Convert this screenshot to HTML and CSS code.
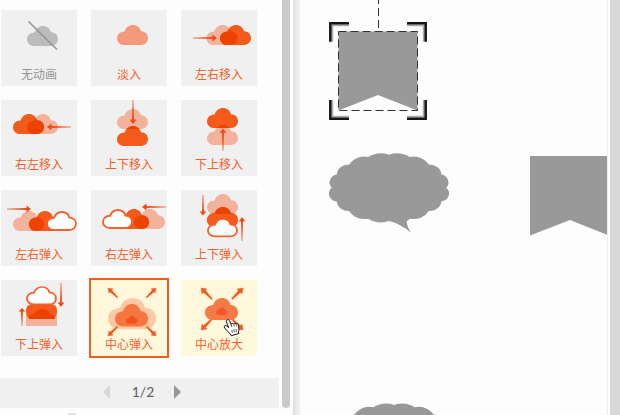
FILE: index.html
```html
<!DOCTYPE html>
<html lang="zh-CN">
<head>
<meta charset="utf-8">
<title>动画</title>
<link rel="stylesheet" href="styles.css">
</head>
<body>
<svg class="defs" width="0" height="0" aria-hidden="true">
  <defs>
    <path id="cloud" d="M7.200 20C3 20 0 17 0 13.200S3 6.600 7.600 6.400C9 2.300 12.200 0 16 0s7 2.400 8 6.300C28.300 6.500 31 9.300 31 13.100S28.200 20 24 20z"/>
    <clipPath id="clip"><use href="#cloud"/></clipPath>
    <linearGradient id="fade" gradientUnits="userSpaceOnUse" x1="0" y1="0" x2="20" y2="0"><stop offset="0" stop-color="#f04a10" stop-opacity=".3"/><stop offset="1" stop-color="#f04a10"/></linearGradient>
    <g id="arrow"><path d="M0-1h20v2H0z" fill="url(#fade)"/><path d="M19.500-3.400L24 0l-4.500 3.400z" fill="#f04a10"/></g>
    <path id="ray" d="M0 0l5.200.9-1.300 1.300L10 9.300 9.300 10 2.200 3.900.9 5.200z" fill="#f25a20" stroke="#f25a20" stroke-width=".4"/>
  </defs>
</svg>
<div class="app">
  <aside class="panel">
    <div class="content">
      <div class="grid">
        <button class="tile off"><svg viewBox="0 0 76 57"><use href="#cloud" x="26" y="16" fill="#bcbcbc"/><path d="M27.500 11.500L56 39.500" stroke="#969696" stroke-width="1.700"/></svg><span>无动画</span></button>
        <button class="tile"><svg viewBox="0 0 76 57"><use href="#cloud" x="26" y="15" fill="#f49a7a"/></svg><span>淡入</span></button>
        <button class="tile"><svg viewBox="0 0 76 57"><use href="#cloud" x="25.500" y="15" class="pale"/><use href="#cloud" x="39" y="15" class="solid"/><g transform="translate(39 15)" clip-path="url(#clip)"><use href="#cloud" x="-13.500" class="deep"/></g><use href="#arrow" transform="translate(12 28)"/></svg><span>左右移入</span></button>
        <button class="tile"><svg viewBox="0 0 76 57"><use href="#cloud" x="26" y="14" class="pale"/><use href="#cloud" x="12" y="14" class="solid"/><g transform="translate(12 14)" clip-path="url(#clip)"><use href="#cloud" x="14" class="deep"/></g><use href="#arrow" transform="translate(70 27) scale(-1 1)"/></svg><span>右左移入</span></button>
        <button class="tile"><svg viewBox="0 0 76 57"><use href="#cloud" x="26" y="9" class="pale"/><use href="#cloud" x="26" y="26" class="solid"/><g transform="translate(26 26)" clip-path="url(#clip)"><use href="#cloud" y="-17" class="deep"/></g><use href="#arrow" transform="translate(42 0) rotate(90)"/></svg><span>上下移入</span></button>
        <button class="tile"><svg viewBox="0 0 76 57"><use href="#cloud" x="26" y="25" class="pale"/><use href="#cloud" x="26" y="8" class="solid"/><g transform="translate(26 8)" clip-path="url(#clip)"><use href="#cloud" y="17" class="deep"/></g><use href="#arrow" transform="translate(42 51) rotate(-90) scale(.94 1)"/></svg><span>下上移入</span></button>
        <button class="tile"><svg viewBox="0 0 76 57"><use href="#cloud" x="12" y="21" class="pale"/><use href="#cloud" x="28" y="21" class="solid"/><g transform="translate(28 21)" clip-path="url(#clip)"><use href="#cloud" x="-16" class="deep"/></g><use href="#cloud" transform="translate(46 22) scale(.935 .9)" class="hollow"/><use href="#arrow" transform="translate(6 19)"/></svg><span>左右弹入</span></button>
        <button class="tile"><svg viewBox="0 0 76 57"><use href="#cloud" x="43" y="19" class="pale"/><use href="#cloud" x="27" y="19" class="solid"/><g transform="translate(27 19)" clip-path="url(#clip)"><use href="#cloud" x="16" class="deep"/></g><use href="#cloud" transform="translate(12 20) scale(.935 .9)" class="hollow"/><use href="#arrow" transform="translate(75 17) scale(-1 1)"/></svg><span>右左弹入</span></button>
        <button class="tile"><svg viewBox="0 0 76 57"><use href="#cloud" x="26" y="4" class="pale"/><use href="#cloud" x="26" y="17" class="solid"/><rect x="26" y="23" width="31" height="13" rx="6.500" class="solid"/><g transform="translate(26 17)" clip-path="url(#clip)"><use href="#cloud" y="-13" class="deep"/></g><use href="#cloud" transform="translate(27 29) scale(.935 .87)" class="hollow"/><use href="#arrow" transform="translate(22 5) rotate(90) scale(.85 1)"/><use href="#arrow" transform="translate(61 51) rotate(-90)"/></svg><span>上下弹入</span></button>
        <button class="tile"><svg viewBox="0 0 76 57"><path d="M25 36h31v10H25z" class="pale"/><rect x="25" y="24" width="31" height="15" rx="6" class="solid"/><path d="M28 39c0-4 2-5 5-5 2-4 5-5 8-5s7 1 8 5c3 0 5 2 5 5z" class="deep"/><use href="#cloud" transform="translate(26 7) scale(.935 .87)" class="hollow"/><use href="#arrow" transform="translate(21 46) rotate(-90) scale(.75 1)"/><use href="#arrow" transform="translate(60 3) rotate(90)"/></svg><span>下上弹入</span></button>
        <button class="tile warm selected"><svg viewBox="0 0 76 57"><use href="#cloud" transform="translate(17 18) scale(1.550)" fill="#fbc9a4"/><use href="#cloud" transform="translate(24 24) scale(1.065 1.120)" fill="#f67540"/><use href="#cloud" transform="translate(35 36) scale(.37)" fill="#f1521c"/><use href="#ray" transform="translate(17 8)"/><use href="#ray" transform="translate(65 8) scale(-1 1)"/><use href="#ray" transform="translate(17 56) scale(1 -1)"/><use href="#ray" transform="translate(65 56) scale(-1)"/></svg><span>中心弹入</span></button>
        <button class="tile warm"><svg viewBox="0 0 76 57"><use href="#ray" transform="translate(20 8) scale(1.150)"/><use href="#ray" transform="translate(62 8) scale(-1.150 1.150)"/><use href="#ray" transform="translate(20 50) scale(1.150 -1.150)"/><use href="#ray" transform="translate(62 50) scale(-1.150)"/><use href="#cloud" transform="translate(24 18) scale(1.065 1.100)" fill="#f67a48"/><use href="#cloud" transform="translate(35 27.500) scale(.37)" fill="#f15a28"/><path class="hand" d="M46.300 39.800c1-.5 1.900.1 2.300 1l1.500 3.700c.3-1.300 1.900-1.500 2.500-.3.400-1.200 1.900-1.300 2.400-.1.600-1 1.900-.7 2.200.5.600 2.500 1.200 5.200.2 7.300l.4 1.700-7.600 2.100-.9-1.700c-1.900-1.600-3.900-3.800-5.500-5.900-.9-1.300-.7-2.500.4-2.600 1.200-.1 2.200 1.200 3.400 2.100L45.400 41.700c-.3-.9.100-1.600.9-1.900z"/><path class="fingers" d="M50.100 44.500l.8 2.600M52.600 44.200l.7 2.400M55 44.100l.6 2.200M50.700 50l.8 2.800M52.800 49.500l.7 2.800M54.900 49l.6 2.800"/></svg><span>中心放大</span></button>
      </div>
      <nav class="pager">
        <svg class="tri" viewBox="0 0 7 14"><path d="M7 0v14L0 7z" fill="#d6d6d6"/></svg>
        <span class="count">1/2</span>
        <svg class="tri" viewBox="0 0 7 14"><path d="M0 0v14l7-7z" fill="#979797"/></svg>
      </nav>
      <div class="next"></div>
    </div>
    <div class="thumb"></div>
  </aside>
  <div class="divider"></div>
  <main class="stage">
    <svg width="307" height="415" viewBox="300 0 307 415">
      <defs>
        <path id="bubble" d="M389 154.700A24 24 0 0 1 409.700 157A17 15 0 0 1 428.700 164.500A12 10 0 0 1 441.300 174.500A8.500 8 0 0 1 446.300 187.700A8.500 8 0 0 1 441.300 201.500A12 10 0 0 1 428.700 211A17 15 0 0 1 410 218.700L406.500 221.500Q407 227 411 232.700Q401 224 389 221A24 24 0 0 1 368.300 218.700A17 15 0 0 1 349.300 211A12 10 0 0 1 336.800 201.500A8.500 8 0 0 1 331.700 187.700A8.500 8 0 0 1 336.800 174.500A12 10 0 0 1 349.300 164.500A17 15 0 0 1 368.300 157A24 24 0 0 1 389 154.700z"/>
      </defs>
      <g fill="#999">
        <path d="M338.500 31.500h79v79l-39.500-15.500-39.500 15.500z"/>
        <path d="M530 156h79v79.500L570 220l-40 15.500z"/>
        <use href="#bubble"/>
        <use href="#bubble" x="5" y="250.300"/>
      </g>
      <rect x="338.500" y="31.500" width="79" height="79" class="dash"/>
      <path d="M378.500 -4v34" class="dash"/>
      <g class="corners">
        <path class="soft" d="M348.900 25.200h-16.700v16.500M407 25.200h16.800v16.500M348.900 116.800h-16.700v-16.700M407 116.800h16.800v-16.700"/>
        <path d="M349 23.300h-18.700v18.400M407 23.300h18.700v18.400M349 118.700h-18.700v-18.600M407 118.700h18.700v-18.600"/>
      </g>
    </svg>
  </main>
  <div class="gutter"></div>
</div>
</body>
</html>
```
FILE: styles.css
```css
* { box-sizing: border-box; }
body { margin: 0; overflow: hidden; background: #fdfdfd; font-family: "Noto Sans CJK SC", sans-serif; }
.defs { position: absolute; }
.app { display: flex; width: 620px; height: 415px; overflow: hidden; }
.panel { display: flex; width: 293px; height: 415px; gap: 3px; }
.content { width: 279px; }
.grid { display: grid; grid-template-columns: repeat(3, 76px); grid-auto-rows: 76px; gap: 14px; padding: 10px 0 0 1px; }
.tile { display: flex; flex-direction: column; align-items: center; justify-content: flex-start; padding: 0; border: 0; background: #f0f0f0; color: #f2612a; font: 12px/14px "Noto Sans CJK SC", sans-serif; }
.tile svg { display: block; width: 76px; height: 57px; flex: none; overflow: visible; }
.tile span { white-space: nowrap; }
.off { color: #969696; }
.warm { background: #fff8dc; }
.selected { outline: 2px solid #f45d1d; }
.pale { fill: #f3b29c; }
.solid { fill: #f45b1a; }
.deep { fill: #ee4200; }
.hollow { fill: #fff; stroke: #f2622c; stroke-width: 2; }
.hand { fill: #fff; stroke: #111; stroke-width: 1; stroke-linejoin: round; }
.fingers { fill: none; stroke: #111; stroke-width: .7; }
.pager { display: flex; align-items: center; height: 30px; margin-top: 22px; padding-left: 103px; background: #f0f0f0; }
.tri { width: 7px; height: 14px; margin-top: -2px; }
.count { width: 64px; margin-top: -3px; padding-left: 2px; text-align: center; color: #606060; font: 14px/20px Lato, sans-serif; }
.next { width: 14px; height: 14px; margin: 5px 0 0 65px; border-radius: 50%; background: #dedede; }
.thumb { width: 8px; height: 408px; border-radius: 0 0 4px 4px; background: #c9c9c9; }
.divider { width: 7px; background: linear-gradient(90deg, #dcdcdc, #ebebeb 50%, #f3f3f3); }
.stage { width: 307px; overflow: hidden; }
.stage svg { display: block; }
.dash { fill: none; stroke: #333; stroke-width: 1; stroke-dasharray: 8 4; }
.corners { fill: none; stroke: #151515; stroke-width: 2.500; }
.corners .soft { stroke: #aaa; stroke-width: 2; }
.gutter { width: 13px; border-left: 1px solid #eee; background: linear-gradient(90deg, #fdfdfd 2px, #d8d8d8 2px); }
```
